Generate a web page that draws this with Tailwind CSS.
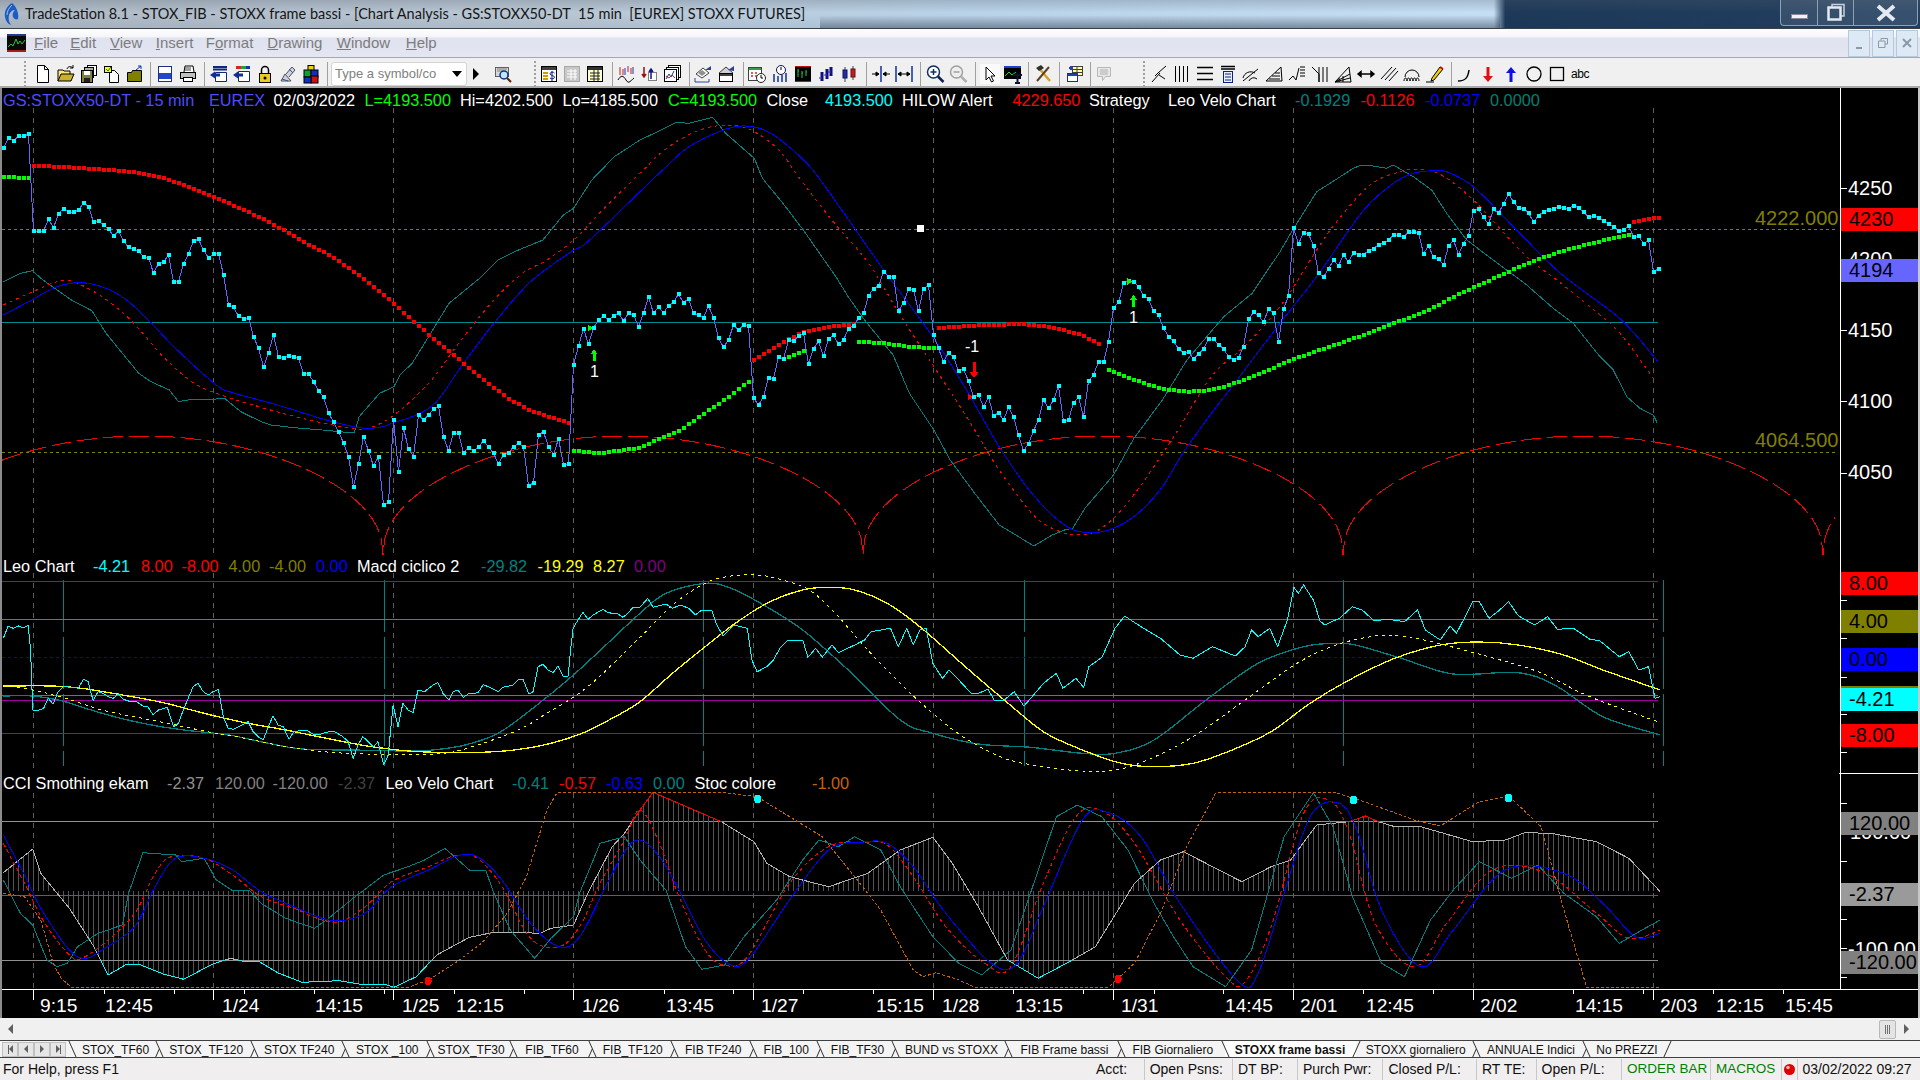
<!DOCTYPE html>
<html>
<head>
<meta charset="utf-8">
<script src="https://cdn.jsdelivr.net/npm/@tailwindcss/browser@4"></script>
</head>
<body class="bg-black">
<div class="w-[1920px] h-[1080px] flex flex-col overflow-hidden bg-[#f0f0f0] font-['Liberation_Sans',Arial,sans-serif]">

<!-- title bar -->
<header class="relative h-[28px] flex items-center pl-[3px] [background:linear-gradient(180deg,transparent_55%,rgba(60,75,95,0.5)_100%)_820px_0/680px_28px_no-repeat,linear-gradient(180deg,rgba(90,100,112,0.3)_0%,rgba(150,160,170,0.05)_45%,rgba(70,85,100,0.12)_100%),linear-gradient(90deg,#b0bcc8_0%,#bccad8_30%,#bcd6ec_50%,#c4def4_70%,#c8e2f8_77.8%,#173354_78.4%,#1c3a5c_100%)]">
  <svg width="18" height="24" viewBox="0 0 18 24"><path d="M9 1C4 4 1 9 2 15c.6 4 3 7 6 8-2-3-3-6-2-10 1-3 3-5 6-5-2 2-3 4-2 7 1 2 3 3 5 2 1-5-1-12-6-16z" fill="#1c5cc4"/><path d="M9 3C6 6 4 9 4 13" stroke="#9cc4f0" fill="none"/></svg>
  <span class="ml-[4px] font-['Lato',sans-serif] text-[14.500px] text-[#161616] whitespace-pre">TradeStation 8.1 - STOX_FIB - STOXX frame bassi - [Chart Analysis - GS:STOXX50-DT  15 min  [EUREX] STOXX FUTURES]</span>
  <div class="ml-auto mr-[2px] h-[26px] w-[138px] flex self-start rounded-b-[4px] border border-t-0 border-[#8fa0b4] bg-[#ffffff18]">
    <div class="w-[37px] flex items-center justify-center border-r border-[#8fa0b4]"><span class="block w-[17px] h-[5px] mt-[7px] bg-[#eef2f6] border border-[#889]"></span></div>
    <div class="w-[36px] flex items-center justify-center border-r border-[#8fa0b4]"><svg width="20" height="20" viewBox="0 0 20 20"><path d="M6 4V1.500h12V13h-3" fill="none" stroke="#c8d2dc" stroke-width="1.500"/><rect x="2.500" y="4.500" width="12" height="12" fill="none" stroke="#e4eaf0" stroke-width="2.500"/></svg></div>
    <div class="flex-1 flex items-center justify-center"><svg width="22" height="20" viewBox="0 0 22 20"><path d="M3 3l16 14M19 3L3 17" stroke="#e4eaf0" stroke-width="4"/></svg></div>
  </div>
</header>
<div class="h-px bg-[#3a3f48]"></div>

<!-- menu bar -->
<nav class="relative h-[28px] flex items-center bg-[linear-gradient(180deg,#fdfdfe_0%,#f6f6f9_28%,#dfe2ef_32%,#e4e6f2_100%)] text-[15px] text-[#7c7c7c]">
  <svg class="ml-[7px]" width="19" height="18" viewBox="0 0 19 18"><rect width="19" height="18" fill="#0a0a0a"/><rect y="0" width="19" height="2" fill="#2a3a8a"/><rect y="16" width="19" height="2" fill="#a02020"/><path d="M1 13l3-3 2 2 3-7 2 5 2-3 2 3 3-4" stroke="#2fc040" fill="none"/></svg>
  <span class="ml-[8px]"><u>F</u>ile</span>
  <span class="ml-[12px]"><u>E</u>dit</span>
  <span class="ml-[14px]"><u>V</u>iew</span>
  <span class="ml-[13.500px]"><u>I</u>nsert</span>
  <span class="ml-[12.500px]">F<u>o</u>rmat</span>
  <span class="ml-[14px]"><u>D</u>rawing</span>
  <span class="ml-[14.400px]"><u>W</u>indow</span>
  <span class="ml-[15.700px]"><u>H</u>elp</span>
  <div class="ml-auto mr-[2px] flex gap-[2px] text-[#8a9aa8]">
    <span class="w-[22px] h-[27px] flex items-end justify-center pb-[7px] bg-[#dde9f4] border border-[#b4cade]"><span class="block w-[6px] h-[2px] bg-[#8a98a8]"></span></span>
    <span class="w-[22px] h-[27px] flex items-center justify-center bg-[#dde9f4] border border-[#b4cade]"><svg width="10" height="10" viewBox="0 0 10 10"><path d="M3 2.500V.5h6.500V6H7M.5 3h6.500v6.500H.5z" fill="none" stroke="#8a98a8"/></svg></span>
    <span class="w-[22px] h-[27px] flex items-center justify-center bg-[#dde9f4] border border-[#b4cade]"><svg width="10" height="10" viewBox="0 0 10 10"><path d="M1 1l8 8M9 1l-8 8" stroke="#8a98a8" stroke-width="2"/></svg></span>
  </div>
</nav>
<div class="h-px bg-[#a4a8b0]"></div>

<!-- toolbar -->
<div class="h-[30px] flex items-center pl-[24px] pt-[3px] bg-[#f0f0f0] border-b-2 border-[#a8a8a8] [&>.g]:flex [&>.g>svg]:mx-[1.5px] [&>.g>svg]:w-5 [&>.g>svg]:h-5 [&>.s]:w-px [&>.s]:h-[24px] [&>.s]:bg-[#a0a0a0] [&>.p]:w-[2px] [&>.p]:h-[26px] [&>.p]:border-l-2 [&>.p]:border-dotted [&>.p]:border-[#a0a0a0]">
  <div class="p"></div>
  <div class="g ml-[5px]">
    <svg viewBox="0 0 20 20"><path d="M4.500 1.500h7l4 4v13h-11z" fill="#fff" stroke="#000"/><path d="M11.500 1.500v4h4" fill="none" stroke="#000"/></svg>
    <svg viewBox="0 0 20 20"><path d="M2 17V6h5l1 1h6v3" fill="#ffe680" stroke="#000"/><path d="M2 17l3-7h13l-3 7z" fill="#c8b030" stroke="#000"/><path d="M11 5c1-3 4-3 6-1m0-3v3h-3" fill="none" stroke="#000"/></svg>
    <svg viewBox="0 0 20 20"><rect x="8.500" y="1.500" width="9" height="10" fill="#fff" stroke="#000"/><rect x="5.500" y="3.500" width="9" height="10" fill="#b0b0a0" stroke="#000"/><rect x="2.500" y="6.500" width="11" height="12" fill="#808040" stroke="#000"/><rect x="5" y="7" width="6" height="4" fill="#fff"/><rect x="5" y="14" width="6" height="4" fill="#202020"/></svg>
    <svg viewBox="0 0 20 20"><path d="M7.500 6.500h5l4 4v8h-9z" fill="#fff" stroke="#000"/><rect x="2.500" y="2.500" width="7" height="6" fill="#ff0" stroke="#000"/><path d="M4 5l2 2 3-4" stroke="#080" fill="none"/></svg>
    <svg viewBox="0 0 20 20"><path d="M2.500 8.500h4l1-2h9v11h-14z" fill="#808000" stroke="#000"/><path d="M11 6l5-4m0 0v3m0-3h-3" fill="none" stroke="#0030c0"/></svg>
  </div>
  <div class="s ml-[4px]"></div>
  <div class="g ml-[2px]">
    <svg viewBox="0 0 20 20"><rect x="3.500" y="2.500" width="13" height="15" fill="#fff" stroke="#203080"/><rect x="4" y="9" width="12" height="6" fill="#2048c8"/></svg>
    <svg viewBox="0 0 20 20"><path d="M6 8l1-6h8l1 6" fill="#fff" stroke="#000"/><rect x="2.500" y="8.500" width="15" height="6" fill="#c0c0c0" stroke="#000"/><rect x="5.500" y="13.500" width="9" height="4" fill="#fff" stroke="#000"/><path d="M7 4h6M7 6h6" stroke="#404040"/></svg>
  </div>
  <div class="s ml-[5px]"></div>
  <div class="g ml-[2.5px]">
    <svg viewBox="0 0 20 20"><path d="M4 3h14M4 5.500h14" stroke="#102880" stroke-width="2"/><path d="M6.500 8.500h11v9h-11z" fill="#fff" stroke="#102880"/><path d="M1 11l5-3.500v2h5v3H6v2z" fill="#103090"/></svg>
    <svg viewBox="0 0 20 20"><rect x="4" y="2" width="5" height="3" fill="#e02020"/><rect x="9" y="2" width="5" height="3" fill="#20a040"/><rect x="14" y="2" width="4" height="3" fill="#2030a0"/><path d="M6.500 7.500h11v10h-11z" fill="#fff" stroke="#102880"/><path d="M1 11l5-3.500v2h5v3H6v2z" fill="#103090"/></svg>
    <svg viewBox="0 0 20 20"><rect x="4.500" y="9.500" width="11" height="9" fill="#e8cc20" stroke="#000"/><path d="M6.500 9V6a3.500 3.500 0 017 0v3" fill="none" stroke="#000" stroke-width="1.500"/><circle cx="10" cy="14" r="1.500"/></svg>
    <svg viewBox="0 0 20 20"><path d="M3 17l4-7 6 7zM8 10l6-7 3 3-6 7" fill="#d0d0e0" stroke="#505050"/><path d="M11 5l4 4M4 15l6 2" stroke="#3050a0"/></svg>
    <svg viewBox="0 0 20 20"><rect x="7" y="1.500" width="6" height="6" fill="#f0d000" stroke="#000"/><rect x="3" y="6" width="7" height="7" fill="#10a030" stroke="#000"/><rect x="10" y="6" width="7" height="7" fill="#1030c0" stroke="#000"/><rect x="10" y="12" width="7" height="7" fill="#d01010" stroke="#000"/><rect x="3" y="13" width="7" height="6" fill="#1030c0" stroke="#000"/></svg>
  </div>
  <div class="s ml-[4.5px]"></div>
  <div class="ml-[3px] w-[136px] h-[24px] flex items-center pl-[3px] bg-white border border-[#d4d4d4] rounded-[3px] text-[13px] text-[#808080]">Type a symbol/co<span class="ml-auto mr-[4px] w-0 h-0 border-x-[5px] border-t-[6px] border-x-transparent border-t-black"></span></div>
  <div class="w-[17px] flex justify-center"><span class="w-0 h-0 border-y-[6px] border-l-[6px] border-y-transparent border-l-black"></span></div>
  <div class="g ml-[7px]">
    <svg viewBox="0 0 20 20"><rect x="2.500" y="3.500" width="13" height="9" fill="#d8d8d8" stroke="#606060"/><path d="M4 5h10M4 7h6" stroke="#808080"/><circle cx="11" cy="11" r="4" fill="#bfe6ff" stroke="#103080" stroke-width="1.500"/><path d="M14 14l4 4" stroke="#602000" stroke-width="2"/></svg>
  </div>
  <div class="p ml-[20px]"></div>
  <div class="g ml-[1px]">
    <svg viewBox="0 0 20 20"><rect x="2.500" y="2.500" width="15" height="15" fill="#fff" stroke="#000"/><rect x="3" y="3" width="14" height="3" fill="#404040"/><path d="M4 9h5M4 12h5M4 15h5" stroke="#d0a000" stroke-width="2"/><path d="M13 7v10M15.500 9c-1-1.500-4.500-1-4.500.8s4.500 1.500 4.500 3.400-3.500 2-4.500.8" stroke="#102080" fill="none"/></svg>
    <svg viewBox="0 0 20 20"><rect x="2.500" y="2.500" width="15" height="15" fill="#c8c8c8" stroke="#a8a8a8"/><path d="M5 7h10M5 10h10M5 13h10M9 5v11M13 5v11" stroke="#fff"/></svg>
    <svg viewBox="0 0 20 20"><rect x="2.500" y="2.500" width="15" height="15" fill="#ffffc8" stroke="#000"/><rect x="3" y="3" width="14" height="3" fill="#303030"/><path d="M5 9h10M5 12h10M5 15h10M9 6v11M13 6v11" stroke="#202020"/></svg>
  </div>
  <div class="s ml-[5.5px]"></div>
  <div class="g ml-[2px]">
    <svg viewBox="0 0 20 20"><path d="M4 3v8M7 5v6M12 2v6M15 4v6" stroke="#c02020"/><path d="M9 4v7M17 3v7" stroke="#2030c0"/><path d="M2 16c3-5 5-5 8 0s5 0 8-2" stroke="#000" fill="none"/></svg>
    <svg viewBox="0 0 20 20"><rect x="9.500" y="8.500" width="8" height="8" fill="#fff" stroke="#808080"/><path d="M5 3v9M3 10l2 3 2-3" stroke="#901010" fill="none" stroke-width="1.500"/><path d="M12 15V6M10 8l2-3 2 3" stroke="#101090" fill="none" stroke-width="1.500"/></svg>
    <svg viewBox="0 0 20 20"><rect x="6.500" y="1.500" width="12" height="12" fill="#fff" stroke="#000"/><rect x="4.500" y="3.500" width="12" height="12" fill="#fff" stroke="#000"/><rect x="2.500" y="5.500" width="12" height="12" fill="#fff" stroke="#000"/><path d="M4 15l3-5 2 3 3-6" stroke="#1030a0" fill="none"/><path d="M4 12l3 2 3-3 3 3" stroke="#c02020" fill="none"/></svg>
  </div>
  <div class="s ml-[5px]"></div>
  <div class="g ml-[1.5px]">
    <svg viewBox="0 0 20 20"><path d="M3 10l7-6 6 5-7 5z" fill="#fff" stroke="#404040"/><path d="M5 9l4-3 4 3-4 3z" fill="#909090"/><path d="M12 6l6-4v4" fill="#3040a0"/><path d="M2 18h14v-3" stroke="#3040a0" fill="none"/><path d="M2 14v4" stroke="#3040a0"/></svg>
    <svg viewBox="0 0 20 20"><rect x="3.500" y="9.500" width="13" height="8" fill="#fff" stroke="#000"/><rect x="4" y="10" width="12" height="2" fill="#404040"/><path d="M3 9l7-6 7 6" fill="#d0d0d0" stroke="#404040"/><path d="M12 6l6-4v5" fill="#3040a0"/></svg>
  </div>
  <div class="s ml-[5.5px]"></div>
  <div class="g ml-[2px]">
    <svg viewBox="0 0 20 20"><rect x="1.500" y="3.500" width="13" height="13" fill="#fff" stroke="#404040"/><rect x="2" y="4" width="12" height="2" fill="#30a040"/><path d="M4 9h2M8 9h2M4 12h2M8 12h2" stroke="#c03030" stroke-width="1.500"/><circle cx="14" cy="14" r="4.500" fill="#fff" stroke="#202020"/><path d="M14 11v3h2" stroke="#000" fill="none"/></svg>
    <svg viewBox="0 0 20 20"><circle cx="11" cy="6" r="4.500" fill="#fff" stroke="#101050"/><path d="M11 3v3" stroke="#000"/><path d="M4 10v8M8 12v6M12 11v7M16 9v9" stroke="#1030a0" stroke-width="1.500"/></svg>
    <svg viewBox="0 0 20 20"><rect x="2" y="2" width="16" height="16" fill="#000"/><rect x="2" y="2" width="16" height="1" fill="#c01010"/><rect x="2" y="17" width="16" height="1" fill="#c01010"/><path d="M5 5v8M5 7h1M9 7v7M9 9h1M13 6v6M13 8h1" stroke="#20d040"/></svg>
    <svg viewBox="0 0 20 20"><path d="M6 8v9M11 5v10M15 3v9" stroke="#101080" stroke-width="3"/><path d="M3 14h3M8 11h3M12 8h3" stroke="#3030b0"/></svg>
    <svg viewBox="0 0 20 20"><path d="M6 3v15M14 2v14" stroke="#404040"/><rect x="4" y="6" width="4" height="8" fill="#2030a0" stroke="#101060"/><rect x="12" y="5" width="4" height="8" fill="#c02020" stroke="#601010"/></svg>
  </div>
  <div class="s ml-[5px]"></div>
  <div class="g ml-[2.5px]">
    <svg viewBox="0 0 20 20"><path d="M10 2v16" stroke="#1030a0" stroke-width="1.500"/><path d="M1 10h7M8 10l-3-2v4zM19 10h-7M12 10l3-2v4z" stroke="#000" fill="#000"/></svg>
    <svg viewBox="0 0 20 20"><path d="M2 2v16M18 2v16" stroke="#1030a0" stroke-width="1.500"/><path d="M4 10h12M4 10l3-2v4zM16 10l-3-2v4z" stroke="#000" fill="#000"/></svg>
  </div>
  <div class="s ml-[4.5px]"></div>
  <div class="g ml-[3px]">
    <svg viewBox="0 0 20 20"><circle cx="8.500" cy="8" r="6" fill="#fff" stroke="#103060" stroke-width="1.500"/><path d="M5.500 8h6M8.500 5v6" stroke="#103060" stroke-width="1.500"/><path d="M13 12.500l5.500 5.500" stroke="#102050" stroke-width="2.500"/></svg>
    <svg viewBox="0 0 20 20"><circle cx="8.500" cy="8" r="6" fill="#eee" stroke="#a0a0a0" stroke-width="1.500"/><path d="M5.500 8h6" stroke="#a0a0a0" stroke-width="1.500"/><path d="M13 12.500l5.500 5.500" stroke="#b0b0b0" stroke-width="2.500"/></svg>
  </div>
  <div class="s ml-[5px]"></div>
  <div class="g ml-[2.5px]">
    <svg viewBox="0 0 20 20"><rect x="-1" y="-1" width="22" height="22" fill="#fafafa" stroke="#c0c0c0"/><path d="M6 3v13l3-3 2.500 5 2-1-2.500-5h4z" fill="#fff" stroke="#000"/></svg>
    <svg viewBox="0 0 20 20"><rect x="1" y="2" width="17" height="13" fill="#000"/><rect x="1" y="2" width="17" height="2" fill="#2040d0"/><path d="M2 12l4-4 3 3 4-3" stroke="#20d040" fill="none"/><path d="M10 11h9M14.500 11v8M12 19h5" stroke="#101030" stroke-width="2"/></svg>
  </div>
  <div class="s ml-[4px]"></div>
  <div class="g ml-[2px]">
    <svg viewBox="0 0 20 20"><path d="M5 3l12 14" stroke="#d8a020" stroke-width="2.500"/><path d="M16 3L4 17" stroke="#604020" stroke-width="2"/><path d="M3 4l5-3 3 3-3 2-2 1z" fill="#303030"/></svg>
  </div>
  <div class="s ml-[4.500px]"></div>
  <div class="g ml-[2.500px]">
    <svg viewBox="0 0 20 20"><rect x="8.500" y="2.500" width="10" height="9" fill="#ffffa0" stroke="#404040"/><path d="M8 5.500h10M8 8.500h10M13 3v8" stroke="#404040"/><rect x="3.500" y="9.500" width="10" height="8" fill="#fff" stroke="#203080"/><rect x="4" y="10" width="9" height="2" fill="#2040b0"/><path d="M5 4h4M7 2v4" stroke="#2040c0" stroke-width="2"/></svg>
  </div>
  <div class="s ml-[4.500px]"></div>
  <div class="g ml-[2px]">
    <svg viewBox="0 0 20 20"><path d="M3.500 3.500h13v9h-5l-3 4v-4h-5z" fill="#e8e8e8" stroke="#b8b8b8"/><path d="M6 6h8M6 8h8M6 10h8" stroke="#b0b0b0"/></svg>
  </div>
  <div class="p ml-[27px]"></div>
  <div class="g ml-[2.500px] [&>svg]:fill-none [&>svg]:stroke-black">
    <svg viewBox="0 0 20 20"><path d="M3 18l8-9M6 12l3-3 8-7M10 11l6 4"/></svg>
    <svg viewBox="0 0 20 20"><path d="M3.500 2v16M7.500 2v16M11.500 2v16M15.500 2v16"/></svg>
    <svg viewBox="0 0 20 20"><path d="M2 3.500h16M2 9.500h16M2 15.500h16" stroke-width="1.500"/></svg>
    <svg viewBox="0 0 20 20"><path d="M3 2.500h14M3 5h14" stroke-width="1.500"/><rect x="5.500" y="7.500" width="9" height="11" fill="#e8f0ff" stroke="#102080"/><path d="M7 10h6M7 13h6M7 16h6" stroke="#102080"/></svg>
    <svg viewBox="0 0 20 20"><path d="M2 17l15-12M2 14a8 8 0 0 1 12-5M8 17a5 5 0 0 1 8-2"/></svg>
    <svg viewBox="0 0 20 20"><path d="M2 17h16L17 3zM5 15h11M8 12h8M11 9h5"/></svg>
    <svg viewBox="0 0 20 20"><path d="M2 16l4-4 3 4 3-12M13 3h5M13 6h5M13 9h5M13 12h5"/></svg>
    <svg viewBox="0 0 20 20"><path d="M2 3l7 7v8M9 3v15M13 3v15M17 3v15"/></svg>
    <svg viewBox="0 0 20 20"><path d="M2 18h16L16 3zM2 18l15-8M2 18l15-4M6 14v4M10 12v6"/></svg>
    <svg viewBox="0 0 20 20"><path d="M2 10h16M2 10l3-2.500v5zM18 10l-3-2.500v5z" fill="#000" stroke-width="1.500"/></svg>
    <svg viewBox="0 0 20 20"><path d="M2 15L13 3M6 16L17 4M10 17L19 7"/></svg>
    <svg viewBox="0 0 20 20"><path d="M3 13a7 7 0 0 1 14 0M2 17c0-4 3-4 3 0 0-4 3-4 3 0 0-4 3-4 3 0 0-4 3-4 3 0 0-4 3-4 3 0"/></svg>
    <svg viewBox="0 0 20 20"><path d="M1 18h8"/><path d="M7 14L15 3l3 2-9 11-3 1z" fill="#f0d000"/><path d="M15 3l3 2" stroke="#c01010" stroke-width="2"/></svg>
  </div>
  <div class="s ml-[4.500px]"></div>
  <div class="g ml-[2px] [&>svg]:fill-none [&>svg]:stroke-black">
    <svg viewBox="0 0 20 20"><path d="M3 17c8 0 10-4 11-11" stroke-width="1.500"/></svg>
    <svg viewBox="0 0 20 20"><path d="M10 3v10" stroke="#e01010" stroke-width="3"/><path d="M5 12h10l-5 6z" fill="#e01010" stroke="none"/></svg>
    <svg viewBox="0 0 20 20"><path d="M10 8v10" stroke="#1010e0" stroke-width="3"/><path d="M5 9h10l-5-6z" fill="#1010e0" stroke="none"/></svg>
    <svg viewBox="0 0 20 20"><circle cx="10" cy="10" r="7" stroke-width="1.300"/></svg>
    <svg viewBox="0 0 20 20"><rect x="3.500" y="3.500" width="13" height="13" stroke-width="1.300"/></svg>
    <span class="mx-[1.500px] w-[20px] text-center text-[12px] leading-[20px] tracking-[-0.5px] text-black">abc</span>
  </div>
</div>

<!-- chart -->
<main class="relative h-[930px] bg-black border-x-2 border-l-[#8c8c8c] border-r-[#c8c8c8] overflow-hidden">
  <svg id="chart" class="absolute left-[-2px] top-0" width="1920" height="930" viewBox="0 88 1920 930" shape-rendering="crispEdges"></svg>

  <!-- legends -->
  <div class="absolute left-[-2px] top-[2px] text-[16.300px] leading-[20px] whitespace-nowrap [&>span]:absolute">
    <span class="left-[3px] text-[#4c4cff]">GS:STOXX50-DT - 15 min</span>
    <span class="left-[209px] text-[#4c4cff]">EUREX</span>
    <span class="left-[273.500px] text-white">02/03/2022</span>
    <span class="left-[364.500px] text-[#00ff00]">L=4193.500</span>
    <span class="left-[460px] text-white">Hi=4202.500</span>
    <span class="left-[562.500px] text-white">Lo=4185.500</span>
    <span class="left-[668px] text-[#00ff00]">C=4193.500</span>
    <span class="left-[766.500px] text-white">Close</span>
    <span class="left-[825px] text-[#00ffff]">4193.500</span>
    <span class="left-[902px] text-white">HILOW Alert</span>
    <span class="left-[1012.500px] text-[#ff0000]">4229.650</span>
    <span class="left-[1089px] text-white">Strategy</span>
    <span class="left-[1168px] text-white">Leo Velo Chart</span>
    <span class="left-[1295px] text-[#008080]">-0.1929</span>
    <span class="left-[1360.500px] text-[#ff0000]">-0.1126</span>
    <span class="left-[1425px] text-[#0000ff]">-0.0737</span>
    <span class="left-[1490px] text-[#008070]">0.0000</span>
  </div>
  <div class="absolute left-[-2px] top-[468px] text-[16.300px] leading-[20px] whitespace-nowrap [&>span]:absolute">
    <span class="left-[3px] text-white">Leo Chart</span>
    <span class="left-[93px] text-[#00ffff]">-4.21</span>
    <span class="left-[141px] text-[#ff0000]">8.00</span>
    <span class="left-[181.500px] text-[#ff0000]">-8.00</span>
    <span class="left-[228.500px] text-[#808000]">4.00</span>
    <span class="left-[269px] text-[#808000]">-4.00</span>
    <span class="left-[316px] text-[#0000ff]">0.00</span>
    <span class="left-[357px] text-white">Macd ciclico 2</span>
    <span class="left-[481px] text-[#008080]">-29.82</span>
    <span class="left-[537.500px] text-[#ffff00]">-19.29</span>
    <span class="left-[593px] text-[#ffff00]">8.27</span>
    <span class="left-[634px] text-[#800080]">0.00</span>
  </div>
  <div class="absolute left-[-2px] top-[685px] text-[16.300px] leading-[20px] whitespace-nowrap [&>span]:absolute">
    <span class="left-[3px] text-white">CCI Smothing ekam</span>
    <span class="left-[167px] text-[#909090]">-2.37</span>
    <span class="left-[215px] text-[#808080]">120.00</span>
    <span class="left-[272.500px] text-[#808080]">-120.00</span>
    <span class="left-[338px] text-[#404040]">-2.37</span>
    <span class="left-[385.500px] text-white">Leo Velo Chart</span>
    <span class="left-[512px] text-[#008080]">-0.41</span>
    <span class="left-[559px] text-[#ff0000]">-0.57</span>
    <span class="left-[606px] text-[#0000ff]">-0.63</span>
    <span class="left-[653px] text-[#008080]">0.00</span>
    <span class="left-[694.500px] text-white">Stoc colore</span>
    <span class="left-[812px] text-[#c86400]">-1.00</span>
  </div>

  <!-- chart notes -->
  <div class="absolute left-[-2px] top-0 text-[16px] leading-[20px] text-white [&>span]:absolute">
    <span class="left-[590px] top-[274px]">1</span>
    <span class="left-[965px] top-[249px]">-1</span>
    <span class="left-[1129px] top-[220px]">1</span>
  </div>
  <div class="absolute left-[-2px] top-0 text-[20px] leading-[20px] text-[#808000] [&>span]:absolute">
    <span class="left-[1755px] top-[120px]">4222.000</span>
    <span class="left-[1755px] top-[342px]">4064.500</span>
  </div>

  <!-- right axis labels -->
  <div class="absolute left-[-2px] top-0 text-[20px] leading-[20px] text-white [&>span]:absolute">
    <span class="left-[1848px] top-[90px]">4250</span>
    <span class="left-[1848px] top-[161px]">4200</span>
    <span class="left-[1848px] top-[232px]">4150</span>
    <span class="left-[1848px] top-[303px]">4100</span>
    <span class="left-[1848px] top-[374px]">4050</span>
    <span class="left-[1850px] top-[734px]">100.00</span>
    <span class="left-[1848px] top-[851px]">-100.00</span>
  </div>
  <div class="absolute left-[-2px] top-0 text-[20px] leading-[23px] text-black [&>span]:absolute [&>span]:left-[1841px] [&>span]:w-[77px] [&>span]:h-[23px] [&>span]:pl-[8px]">
    <span class="top-[120px] bg-[#ff0000]">4230</span>
    <span class="top-[171px] bg-[#6666ff]">4194</span>
    <span class="top-[484px] bg-[#ff0000]">8.00</span>
    <span class="top-[522px] bg-[#808000]">4.00</span>
    <span class="top-[560px] bg-[#0000ff]">0.00</span>
    <span class="top-[598px] h-[2px] bg-[#808000]"></span>
    <span class="top-[600px] bg-[#00ffff]">-4.21</span>
    <span class="top-[636px] bg-[#ff0000]">-8.00</span>
    <span class="top-[724px] bg-[#808080]">120.00</span>
    <span class="top-[795px] bg-[#9a9a9a]">-2.37</span>
    <span class="top-[863px] bg-[#808080] pl-[7px]">-120.00</span>
  </div>

  <!-- time axis labels -->
  <div class="absolute left-[-2px] top-[908px] text-[19.200px] leading-[20px] text-white whitespace-nowrap [&>span]:absolute">
    <span class="left-[40px]">9:15</span>
    <span class="left-[105px]">12:45</span>
    <span class="left-[222px]">1/24</span>
    <span class="left-[315px]">14:15</span>
    <span class="left-[402px]">1/25</span>
    <span class="left-[456px]">12:15</span>
    <span class="left-[582px]">1/26</span>
    <span class="left-[666px]">13:45</span>
    <span class="left-[761px]">1/27</span>
    <span class="left-[876px]">15:15</span>
    <span class="left-[942px]">1/28</span>
    <span class="left-[1015px]">13:15</span>
    <span class="left-[1121px]">1/31</span>
    <span class="left-[1225px]">14:45</span>
    <span class="left-[1300px]">2/01</span>
    <span class="left-[1366px]">12:45</span>
    <span class="left-[1480px]">2/02</span>
    <span class="left-[1575px]">14:15</span>
    <span class="left-[1660px]">2/03</span>
    <span class="left-[1716px]">12:15</span>
    <span class="left-[1785px]">15:45</span>
  </div>
</main>

<!-- horizontal scrollbar -->
<div class="h-[22px] flex items-center bg-[#f0f0f0]">
  <span class="ml-[8px] w-0 h-0 border-y-[5px] border-r-[5px] border-y-transparent border-r-[#606060]"></span>
  <span class="ml-auto w-[17px] h-[19px] flex items-center justify-center gap-px bg-[#e4e4e4] border border-[#b8b8b8] rounded-[2px]"><i class="w-px h-[9px] bg-[#707070]"></i><i class="w-px h-[9px] bg-[#707070]"></i><i class="w-px h-[9px] bg-[#707070]"></i></span>
  <span class="ml-[8px] mr-[11px] w-0 h-0 border-y-[5px] border-l-[5px] border-y-transparent border-l-[#606060]"></span>
</div>

<!-- sheet tabs -->
<div class="h-[18px] flex items-center border-y border-[#404040] bg-[#f4f4f4] text-[12px] text-[#101010] whitespace-nowrap [&>.t]:relative [&>.t]:h-full [&>.t]:flex [&>.t]:items-center [&>.t]:justify-center [&>.t]:pt-px">
  <div class="w-[72px] h-full flex items-center pl-[2px] [&>span]:w-[16px] [&>span]:h-[15px] [&>span]:flex [&>span]:items-center [&>span]:justify-center [&>span]:bg-[#e6e6e6] [&>span]:border [&>span]:border-[#c0c0c0]">
    <span><i class="w-px h-[9px] bg-[#606060]"></i><i class="w-0 h-0 border-y-[4px] border-r-[4px] border-y-transparent border-r-[#606060]"></i></span>
    <span><i class="w-0 h-0 border-y-[4px] border-r-[4px] border-y-transparent border-r-[#606060]"></i></span>
    <span><i class="w-0 h-0 border-y-[4px] border-l-[4px] border-y-transparent border-l-[#606060]"></i></span>
    <span><i class="w-0 h-0 border-y-[4px] border-l-[4px] border-y-transparent border-l-[#606060]"></i><i class="w-px h-[9px] bg-[#606060]"></i></span>
  </div>
  <div class="t w-[87px]"><i class="absolute left-0 top-0 h-full w-px bg-[#303030] skew-x-[24deg]"></i>STOX_TF60</div>
  <div class="t w-[94.500px]"><i class="absolute left-0 top-0 h-full w-px bg-[#303030] skew-x-[24deg]"></i><i class="absolute left-[-2px] bottom-0 h-1/2 w-px bg-[#303030] -skew-x-[24deg]"></i>STOX_TF120</div>
  <div class="t w-[91.500px]"><i class="absolute left-0 top-0 h-full w-px bg-[#303030] skew-x-[24deg]"></i><i class="absolute left-[-2px] bottom-0 h-1/2 w-px bg-[#303030] -skew-x-[24deg]"></i>STOX TF240</div>
  <div class="t w-[84.500px]"><i class="absolute left-0 top-0 h-full w-px bg-[#303030] skew-x-[24deg]"></i><i class="absolute left-[-2px] bottom-0 h-1/2 w-px bg-[#303030] -skew-x-[24deg]"></i>STOX _100</div>
  <div class="t w-[83px]"><i class="absolute left-0 top-0 h-full w-px bg-[#303030] skew-x-[24deg]"></i><i class="absolute left-[-2px] bottom-0 h-1/2 w-px bg-[#303030] -skew-x-[24deg]"></i>STOX_TF30</div>
  <div class="t w-[79px]"><i class="absolute left-0 top-0 h-full w-px bg-[#303030] skew-x-[24deg]"></i><i class="absolute left-[-2px] bottom-0 h-1/2 w-px bg-[#303030] -skew-x-[24deg]"></i>FIB_TF60</div>
  <div class="t w-[82.500px]"><i class="absolute left-0 top-0 h-full w-px bg-[#303030] skew-x-[24deg]"></i><i class="absolute left-[-2px] bottom-0 h-1/2 w-px bg-[#303030] -skew-x-[24deg]"></i>FIB_TF120</div>
  <div class="t w-[78.500px]"><i class="absolute left-0 top-0 h-full w-px bg-[#303030] skew-x-[24deg]"></i><i class="absolute left-[-2px] bottom-0 h-1/2 w-px bg-[#303030] -skew-x-[24deg]"></i>FIB TF240</div>
  <div class="t w-[67.500px]"><i class="absolute left-0 top-0 h-full w-px bg-[#303030] skew-x-[24deg]"></i><i class="absolute left-[-2px] bottom-0 h-1/2 w-px bg-[#303030] -skew-x-[24deg]"></i>FIB_100</div>
  <div class="t w-[75px]"><i class="absolute left-0 top-0 h-full w-px bg-[#303030] skew-x-[24deg]"></i><i class="absolute left-[-2px] bottom-0 h-1/2 w-px bg-[#303030] -skew-x-[24deg]"></i>FIB_TF30</div>
  <div class="t w-[113px]"><i class="absolute left-0 top-0 h-full w-px bg-[#303030] skew-x-[24deg]"></i><i class="absolute left-[-2px] bottom-0 h-1/2 w-px bg-[#303030] -skew-x-[24deg]"></i>BUND vs STOXX</div>
  <div class="t w-[113px]"><i class="absolute left-0 top-0 h-full w-px bg-[#303030] skew-x-[24deg]"></i><i class="absolute left-[-2px] bottom-0 h-1/2 w-px bg-[#303030] -skew-x-[24deg]"></i>FIB Frame bassi</div>
  <div class="t w-[103.500px]"><i class="absolute left-0 top-0 h-full w-px bg-[#303030] skew-x-[24deg]"></i><i class="absolute left-[-2px] bottom-0 h-1/2 w-px bg-[#303030] -skew-x-[24deg]"></i>FIB Giornaliero</div>
  <div class="t w-[131px] bg-white font-bold"><i class="absolute left-0 top-0 h-full w-px bg-[#303030] skew-x-[24deg]"></i>STOXX frame bassi</div>
  <div class="t w-[120.500px]"><i class="absolute left-0 top-0 h-full w-px bg-[#303030] -skew-x-[24deg]"></i>STOXX giornaliero</div>
  <div class="t w-[110px]"><i class="absolute left-0 top-0 h-full w-px bg-[#303030] skew-x-[24deg]"></i><i class="absolute left-[-2px] bottom-0 h-1/2 w-px bg-[#303030] -skew-x-[24deg]"></i>ANNUALE Indici</div>
  <div class="t w-[82px]"><i class="absolute left-0 top-0 h-full w-px bg-[#303030] skew-x-[24deg]"></i><i class="absolute left-[-2px] bottom-0 h-1/2 w-px bg-[#303030] -skew-x-[24deg]"></i>No PREZZI<i class="absolute right-0 top-0 h-full w-px bg-[#303030] -skew-x-[24deg]"></i></div>
</div>

<!-- status bar -->
<footer class="h-[22px] flex items-center pt-px bg-[#f0eeee] text-[14px] text-[#101010] whitespace-nowrap [&>.c]:h-full [&>.c]:flex [&>.c]:items-center [&>.c]:pl-[5px] [&>.c]:border-l [&>.c]:border-[#c8c8c8]">
  <span class="pl-[3px] flex-1">For Help, press F1</span>
  <span class="w-[53.700px] pl-[6px]">Acct:</span>
  <span class="c w-[88.300px]">Open Psns:</span>
  <span class="c w-[65px]">DT BP:</span>
  <span class="c w-[85.500px]">Purch Pwr:</span>
  <span class="c w-[93.500px]">Closed P/L:</span>
  <span class="c w-[59.600px]">RT TE:</span>
  <span class="c w-[85.400px]">Open P/L:</span>
  <span class="c w-[89px] text-[13.500px] text-[#008000]">ORDER BAR</span>
  <span class="c w-[70.600px] text-[13.500px] text-[#008000]">MACROS</span>
  <span class="c w-[16px]"><svg class="ml-[-4px] shrink-0" width="13" height="13" viewBox="0 0 13 13"><circle cx="6.500" cy="6.500" r="5.500" fill="#e00000"/><circle cx="5" cy="4.500" r="1.800" fill="#ffb0b0"/></svg></span>
  <span class="c w-[123.500px]">03/02/2022 09:27</span>
</footer>
</div>

<script>
const zA=x=>x/2.45, zB=x=>640+x/2.45, zC=x=>1160+x/3, zD=x=>640+x/1.537;
const yA=y=>100+y/3, yB=y=>550+y/3;
const P=(f,g,a)=>{const o=[];for(let i=0;i<a.length;i+=2)o.push([f(a[i]),g(a[i+1])]);return o};
const C=(g,a)=>P(zC,g,a).filter(p=>p[0]>=1279.9);
const uniq=a=>a.filter((p,i)=>i==0||p[0]>a[i-1][0]+0.2);
let s='';
const poly=(p,c,w=1,d='')=>{s+=`<path d="M${p.map(q=>q[0].toFixed(1)+' '+q[1].toFixed(1)).join('L')}" fill="none" stroke="${c}" stroke-width="${w}" ${d?`stroke-dasharray="${d}"`:''} stroke-linejoin="round"/>`};
const smooth=(p,c,w=1,d='')=>{let t=`M${p[0][0].toFixed(1)} ${p[0][1].toFixed(1)}`;for(let i=0;i<p.length-1;i++){const a=p[i-1]||p[i],b=p[i],e=p[i+1],f=p[i+2]||e;t+=`C${(b[0]+(e[0]-a[0])/6).toFixed(1)} ${(b[1]+(e[1]-a[1])/6).toFixed(1)} ${(e[0]-(f[0]-b[0])/6).toFixed(1)} ${(e[1]-(f[1]-b[1])/6).toFixed(1)} ${e[0].toFixed(1)} ${e[1].toFixed(1)}`}s+=`<path d="${t}" fill="none" stroke="${c}" stroke-width="${w}" ${d?`stroke-dasharray="${d}"`:''}/>`};
const lerp=(p,x)=>{for(let i=0;i<p.length-1;i++){if(x>=p[i][0]&&x<=p[i+1][0]){const t=(x-p[i][0])/(p[i+1][0]-p[i][0]||1);return p[i][1]+t*(p[i+1][1]-p[i][1])}}return x<p[0][0]?p[0][1]:p[p.length-1][1]};
const hl=(y,x1,x2,c,w=1,d='')=>{s+=`<path d="M${x1} ${y}H${x2}" stroke="${c}" stroke-width="${w}" ${d?`stroke-dasharray="${d}"`:''}/>`};
const vl=(x,y1,y2,c,w=1,d='')=>{s+=`<path d="M${x} ${y1}V${y2}" stroke="${c}" stroke-width="${w}" ${d?`stroke-dasharray="${d}"`:''}/>`};
const dots=(p,c,x1,x2)=>{for(let k=Math.ceil((x1-3.5)/5);3.5+5*k<=x2;k++){const x=3.5+5*k;s+=`<rect x="${x-2}" y="${(lerp(p,x)-2).toFixed(1)}" width="4" height="4" fill="${c}"/>`}};

s+=`<defs><clipPath id="ca"><rect x="0" y="0" width="1920" height="821.7"/></clipPath><clipPath id="cb"><rect x="0" y="821.7" width="1920" height="138.600"/></clipPath><clipPath id="cc"><rect x="0" y="960.300" width="1920" height="100"/></clipPath></defs>`;

/* vertical grid */
for(let k=0;k<10;k++){const x=33.5+180*k;vl(x,108,555,'#5c5c5c',1,'5 5');vl(x,573,771,'#5c5c5c',1,'5 5');vl(x,793,989,'#5c5c5c',1,'5 5');}
/* teal cycle markers panel 2 */
[63,384,703,1024,1343,1663].forEach(x=>vl(x+.5,580,766,'#008080',1,'52 5'));

/* main panel */
hl(229.5,2,1838,'#808000',1,'3 3');
hl(452.5,2,1838,'#808000',1,'3 3');
hl(322.5,2,1658,'#008c8c',1);
{let a=[];for(let x=2;x<=1836;x+=1.5){const d=((x-383)%480+480)%480;a.push([x,555-119*Math.pow(Math.sin(Math.PI*d/480),.45)])}poly(a,'#ff0000',1,'20 6');}

poly(uniq([...P(zA,yA,[8,545,50,520,80,512,100,535,140,570,175,600,225,632,260,700,300,760,340,820,370,845,415,870,437,905,470,898,520,898,550,895,590,935,640,965,665,975,720,983,790,990,840,996,868,998,880,950,930,880,965,860,980,825,1010,790,1050,710,1100,610,1180,530,1220,480,1260,455,1330,420,1380,345,1405,325,1450,240,1505,170,1568,120]),...P(zB,yA,[40,97,90,67,120,70,178,52,210,100,280,175,300,235,350,310,400,390,480,530,510,590,550,660,620,765,660,880,720,990,760,1080,820,1180,880,1275,965,1338,1010,1305,1040,1290,1060,1285,1090,1225,1160,1125,1210,1015,1280,900,1340,780,1430,650,1500,580,1568,455]),...C(yA,[395,395,470,275,510,250,580,205,605,195,640,198,680,205,700,195,760,230,815,270,860,340,920,420,1000,480,1100,555,1180,625,1240,670,1320,770,1360,810,1400,890,1440,925,1480,945,1492,970])]),'#008080');

smooth(uniq([...P(zA,yA,[8,615,80,575,140,545,180,545,250,590,320,660,400,770,470,845,530,880,620,915,740,955,860,985,900,985,960,950,1050,850,1130,720,1210,600,1280,520,1340,480,1410,415,1480,325,1568,220]),...P(zB,yA,[60,150,130,98,190,77,240,78,280,95,340,150,400,250,480,375,560,490,640,650,720,800,800,950,880,1110,960,1240,1010,1285,1070,1305,1130,1285,1200,1200,1300,1025,1400,830,1480,740,1568,620]),...C(yA,[470,450,530,365,630,255,720,215,780,208,850,228,940,300,1010,375,1100,470,1190,540,1290,620,1380,700,1480,835])]),'#ff0000',1,'3 4');

smooth(uniq([...P(zA,yA,[8,645,70,605,140,560,200,548,260,565,310,600,370,668,430,745,530,855,570,878,660,908,720,930,800,960,880,983,930,982,965,968,1020,945,1070,905,1130,800,1210,670,1300,545,1400,455,1440,425,1568,275]),...P(zB,yA,[60,205,120,140,200,92,250,78,300,88,350,125,420,205,500,340,600,515,720,715,800,870,880,1040,960,1180,1040,1275,1100,1298,1160,1285,1220,1240,1280,1160,1330,1060,1400,940,1460,845,1568,670]),...C(yA,[470,530,560,400,620,320,700,250,760,220,820,212,860,215,940,260,1060,380,1190,510,1280,580,1390,665,1492,782])]),'#0000ff');

/* red / green dotted strategy lines */
dots(P(zA,yA,[8,230,70,234]),'#00ff00',3,31);
dots(P(zA,yA,[80,197,200,204,300,213,350,220,400,235,450,255,500,280,550,305,600,332,650,360,700,395,750,430,800,462,850,500,900,545,950,595,1000,650,1050,705,1100,755,1150,805,1200,855,1250,900,1300,932,1350,952,1392,968]),'#ff0000',33,570);
dots(uniq([...P(zA,yA,[1404,1052,1465,1060,1563,1044]),...P(zB,yA,[50,1015,100,990,150,945,200,905,265,845])]),'#00ff00',573,749);
dots(P(zB,yA,[277,780,340,733,400,695,450,683,522,672]),'#ff0000',753,854);
dots(P(zB,yA,[350,778,405,750]),'#00ff00',783,806);
dots(P(zB,yA,[535,725,600,730,660,740,725,745]),'#00ff00',858,936);
dots(P(zB,yA,[725,684,840,675,940,672,1010,682,1080,705,1135,738]),'#ff0000',938,1103);
dots(uniq([...P(zB,yA,[1147,808,1190,832,1250,855]),...P(zC,yA,[10,868,85,875,130,873,200,858,300,820,400,777,500,743,600,708,700,670,800,632,900,580,1000,535,1100,490,1200,455,1300,428,1405,404])]),'#00ff00',1108,1629);
dots(P(zC,yA,[1420,365,1495,353]),'#ff0000',1633,1659);

/* price */
{const raw=[...P(zA,yA,[8,143,20,113,32,123,45,108,57,108,69,103,81,393,94,393,106,393,118,358,130,383,142,341,155,326,167,336,179,336,192,331,204,308,216,320,228,366,241,362,253,376,265,387,277,408,290,394,302,423,314,442,326,448,339,452,351,470,363,473,375,519,388,491,400,485,412,466,424,545,436,545,449,491,461,461,473,423,485,418,498,450,510,473,522,463,535,461,547,524,559,614,571,622,584,648,596,656,608,653,620,710,632,745,645,801,657,758,669,706,681,770,694,775,706,768,718,770,730,773,742,822,755,821,767,845,779,872,791,892,804,938,816,966,828,996,840,1028,853,1070,865,1160,877,1092,889,1010,902,1052,914,1098,926,1070,939,1215,951,1206,963,960,975,1115,987,985,1000,1046,1012,1070,1024,946,1036,960,1049,944,1061,928,1073,919,1085,1010,1098,1052,1110,998,1122,1000,1135,1058,1147,1043,1159,1052,1171,1041,1184,1022,1196,1041,1208,1060,1220,1092,1232,1064,1245,1058,1257,1040,1269,1030,1281,1040,1294,1157,1306,1149,1318,1004,1330,996,1343,1040,1355,1064,1367,1016,1380,1094,1392,1092,1404,795,1416,738,1428,686,1441,733,1453,683,1465,660,1477,648,1490,660,1502,648,1514,640,1526,662,1538,640,1551,644,1563,680]),
...P(zB,yA,[8,640,20,592,32,640,45,622,57,638,69,618,81,606,94,583,106,608,118,596,130,640,142,646,155,654,167,617,179,654,192,715,204,742,216,720,228,675,241,690,253,675,265,678,277,893,290,915,302,890,314,833,326,836,339,770,351,778,363,720,375,724,388,708,400,700,412,792,424,746,436,724,449,768,461,716,473,705,485,733,498,720,510,686,522,677,535,655,547,640,559,588,571,566,584,558,596,515,608,530,620,530,632,633,645,608,657,566,669,570,681,633,694,566,706,556,718,705,730,745,743,786,755,758,767,772,779,812,791,808,804,843,816,890,828,884,841,920,853,890,865,948,877,938,889,960,902,922,914,950,926,1005,938,1052,951,1032,963,992,975,960,987,900,1000,925,1012,900,1024,858,1036,963,1049,960,1061,908,1073,892,1085,952,1098,843,1110,825,1122,785,1135,785,1147,725,1159,623,1171,607,1184,550,1196,543,1208,545,1220,560,1233,587,1245,597,1257,633,1269,646,1281,684,1294,710,1306,724,1318,746,1330,758,1343,756,1355,776,1367,762,1380,746,1392,716,1404,718,1416,734,1428,746,1441,770,1453,780,1465,774,1477,740,1490,658,1502,637,1514,646,1526,666,1538,627,1551,640,1563,725]),
...C(yA,[370,627,385,588,400,385,415,432,430,398,445,402,460,437,475,520,490,530,505,507,520,480,535,497,550,465,565,485,580,458,595,464,610,464,625,452,640,446,655,434,670,430,685,420,700,404,715,406,730,410,745,397,760,396,775,398,790,461,805,437,820,472,835,476,850,494,865,438,880,420,895,464,910,431,925,407,940,332,955,328,970,352,985,372,1000,328,1015,340,1030,312,1045,282,1060,305,1075,323,1090,326,1105,338,1120,366,1135,347,1150,335,1165,329,1180,328,1195,320,1210,325,1225,326,1240,317,1255,323,1270,336,1285,350,1300,347,1315,353,1330,362,1345,372,1360,380,1375,392,1390,390,1405,377,1420,410,1435,407,1450,431,1465,420,1480,515,1495,507])];
const snap=raw.map(p=>[3.5+5*Math.round((p[0]-3.5)/5),p[1]]);
poly(snap,'#6666ff');
snap.forEach(p=>{s+=`<rect x="${p[0]-2}" y="${(p[1]-2).toFixed(1)}" width="4" height="4" fill="#00ffff"/>`});}

/* markers */
s+=`<rect x="917" y="225" width="7" height="7" fill="#fff"/>`;
const up=(x,y,c)=>{s+=`<path d="M${x} ${y}l3.500 5h-2v7h-3v-7h-2z" fill="${c}"/>`};
up(594,349,'#00ff00');up(1133.500,295,'#00ff00');
s+=`<path d="M972.500 362h3v10h3l-4.500 6-4.500-6h3z" fill="#ff0000"/>`;
s+=`<path d="M588 324.500l5 3.500-5 3.500zM1127 278l5 3.500-5 3.500z" fill="#00ff00"/><path d="M968 393.500l5 3.500-5 3.500z" fill="#ff0000"/>`;

/* panel 2 horizontals */
hl(581.5,2,1658,'#e00000');
hl(619.5,2,1658,'#808000');
hl(657.5,2,1658,'#0000e0',1,'3 3');
hl(695.5,2,1658,'#808000');
hl(700.5,2,1658,'#a000a0');
hl(733.5,2,1658,'#e00000');

/* panel 2 curves */
smooth(uniq([...P(zA,yB,[8,438,80,438,150,452,250,490,350,520,450,540,560,555,650,578,740,597,860,600,1000,603,1060,600,1140,585,1220,550,1300,480,1400,380,1480,290,1568,190]),...P(zD,yB,[40,130,100,100,140,115,190,165,250,240,320,360,400,510,450,550,520,582,600,592,680,610,730,610,790,570,870,450,950,340,1020,290,1070,280,1100,285,1170,325,1250,372,1350,368,1410,410,1480,500,1568,555])]),'#008080',1.300);
smooth(uniq([...P(zA,yB,[8,405,80,420,160,445,250,480,350,505,450,530,520,548,600,565,700,590,800,606,900,612,1000,615,1060,612,1130,600,1260,545,1340,490,1440,410,1568,262]),...P(zD,yB,[50,165,100,100,140,78,180,75,215,88,260,120,300,190,350,300,400,400,450,490,500,565,560,625,620,650,680,663,730,660,780,630,850,560,930,450,1010,340,1070,285,1130,258,1170,258,1210,272,1300,318,1380,365,1460,440,1568,518])]),'#ffff00',1,'3 4');
smooth(uniq([...P(zA,yB,[8,408,130,408,200,415,300,435,400,458,500,490,600,518,700,540,800,565,900,588,1000,603,1100,608,1180,607,1260,600,1350,580,1430,548,1500,505,1568,455]),...P(zD,yB,[50,370,100,290,150,215,200,155,250,120,290,112,330,120,380,160,430,230,500,350,560,450,620,545,680,600,740,640,790,650,850,640,910,600,970,545,1030,460,1090,390,1160,325,1230,285,1290,276,1350,285,1420,315,1480,360,1568,420])]),'#ffff00',1.300);
poly(uniq([...P(zA,yB,[8,265,20,228,32,235,45,228,57,233,69,226,75,300,80,480,95,480,107,475,118,445,130,462,142,425,155,410,180,412,192,415,204,388,216,395,228,452,240,425,253,430,265,440,277,445,290,432,302,448,320,455,335,455,350,468,362,470,375,495,388,480,410,472,425,530,437,520,449,480,461,445,473,410,485,400,498,425,510,435,522,425,535,418,547,500,559,535,571,538,584,530,608,515,620,545,632,560,645,570,657,530,669,498,681,525,694,530,708,568,720,545,735,542,750,540,767,552,779,555,805,545,820,545,840,560,853,575,865,625,877,585,889,560,902,575,914,590,926,575,940,645,951,615,963,465,975,530,987,460,1000,480,1012,488,1024,420,1040,425,1061,405,1073,398,1085,430,1100,450,1110,425,1122,420,1135,442,1147,432,1171,428,1184,404,1196,410,1220,425,1232,412,1257,405,1269,390,1281,388,1296,432,1306,425,1318,350,1330,343,1343,360,1355,368,1367,348,1380,380,1392,378,1398,300,1404,235,1416,210,1428,187,1441,208,1453,195,1477,178,1490,188,1514,192,1526,202,1538,190,1551,172,1568,172]),...P(zD,yB,[12,145,20,172,40,162,50,175,62,165,75,175,85,195,95,180,110,180,118,225,128,258,145,225,165,235,172,330,180,365,195,350,205,330,215,295,228,270,250,270,258,322,270,295,280,322,295,285,305,308,330,285,345,270,355,245,385,235,397,290,410,235,420,285,430,240,440,235,450,340,465,385,475,360,490,390,510,432,520,430,535,418,545,452,560,450,575,425,590,468,605,435,620,400,640,370,650,415,670,385,682,412,690,350,710,322,730,235,745,198,770,230,800,265,830,315,850,325,880,290,915,318,930,290,940,240,950,260,968,235,980,290,995,210,1005,112,1012,130,1020,105,1035,150,1045,212,1052,225,1075,205,1095,170,1110,180,1128,212,1150,208,1175,215,1195,180,1207,240,1230,270,1245,228,1255,250,1280,155,1290,155,1305,205,1320,182,1335,155,1350,197,1375,225,1395,200,1410,238,1435,235,1460,268,1475,272,1505,320,1520,305,1535,360,1550,350,1560,445,1568,440])]),'#00ffff');

/* panel 3 */
hl(821.5,2,1658,'#909090');
{const cci=uniq([...P(zA,yB,[8,968,80,897,100,970,170,1075,230,1190,265,1275,310,1243,340,1243,400,1272,450,1288,520,1243,565,1225,600,1235,635,1235,680,1268,740,1297,830,1292,880,1302,940,1302,965,1312,1020,1280,1070,1215,1150,1162,1210,1147,1290,1147,1320,1152,1350,1135,1405,1125,1440,1030,1500,890,1530,850,1568,780]),...P(zD,yB,[20,727,125,815,175,875,195,940,230,980,290,1010,350,970,400,900,450,862,480,940,520,1070,565,1230,612,1285,660,1235,700,1190,760,1000,800,930,835,905,870,940,925,995,970,950,1000,930,1040,825,1090,815,1115,798,1135,815,1160,830,1200,830,1280,875,1330,870,1360,848,1400,850,1470,875,1520,925,1568,1025])]);
for(let k=1;3.5+5*k<=1653.5;k++){const x=3.5+5*k;vl(x,890.5,lerp(cci,x).toFixed(1),'#545454')}
hl(895.5,2,1658,'#008888');
hl(960.5,2,1658,'#909090');
s+=`<g clip-path="url(#cb)">`;poly(cci,'#b4b4b4');s+=`</g><g clip-path="url(#ca)">`;poly(cci,'#ff0000');s+=`</g><g clip-path="url(#cc)">`;poly(cci,'#00ffff');s+=`</g>`;
poly(uniq([...P(zA,yB,[8,990,50,1090,80,1125,115,1230,140,1250,165,1240,190,1190,240,1150,300,1125,315,1030,350,908,430,915,445,935,500,925,530,990,570,1022,610,1020,640,1060,700,1105,770,1135,800,1110,860,1050,940,975,1000,950,1040,930,1090,895,1150,960,1190,960,1210,1030,1250,1140,1310,1225,1350,1165,1405,1100,1420,1030,1470,880,1530,860,1568,930]),...P(zD,yB,[40,1020,70,1190,95,1258,130,1245,160,1160,210,1050,250,930,275,870,305,890,330,860,370,900,400,1010,450,1160,490,1240,525,1275,570,1200,600,1030,640,800,672,765,710,800,750,900,790,1060,820,1160,850,1250,900,1310,940,1200,990,860,1035,728,1065,830,1095,1040,1140,1240,1175,1280,1215,1110,1250,1020,1290,935,1340,985,1380,945,1420,1030,1470,1100,1505,1180,1540,1140,1568,1110])]),'#008080');
smooth(uniq([...P(zA,yB,[8,880,60,1000,110,1120,170,1215,200,1225,260,1175,330,1090,380,970,420,920,500,925,570,975,640,1040,720,1075,790,1110,840,1112,900,1065,960,995,1050,950,1120,915,1170,925,1230,1010,1300,1165,1370,1190,1420,1130,1470,1000,1530,870,1568,780]),...P(zD,yB,[30,880,60,1040,100,1200,130,1245,165,1220,230,1000,290,890,345,877,380,885,420,980,470,1130,530,1240,570,1250,620,1000,670,800,710,783,760,880,830,1110,900,1280,930,1295,970,1130,1020,790,1060,752,1090,850,1130,1120,1190,1250,1240,1120,1310,960,1390,968,1470,1090,1520,1165,1568,1140])]),'#ff0000',1,'4 3');
smooth(uniq([...P(zA,yB,[8,855,60,975,100,1075,170,1200,210,1225,250,1200,330,1130,380,1010,430,925,500,925,570,960,640,1025,720,1070,790,1105,840,1112,900,1085,960,1010,1050,960,1120,918,1170,920,1230,990,1300,1120,1370,1190,1420,1160,1480,1020,1530,905,1568,870]),...P(zD,yB,[30,920,60,1020,100,1170,140,1245,170,1220,230,1050,290,900,340,877,380,880,420,950,470,1090,540,1240,580,1240,620,1070,680,810,720,788,770,860,830,1060,920,1295,950,1270,990,1030,1030,800,1070,757,1100,830,1140,1080,1200,1250,1250,1140,1330,960,1420,970,1480,1060,1530,1160,1568,1150])]),'#0000ff');
poly(uniq([...P(zA,yB,[8,1030,60,1040,100,1110,130,1240,150,1285,175,1312,1000,1312,1050,1290,1120,1235,1180,1180,1240,1095,1290,980,1340,780,1365,728,1568,728]),...P(zD,yB,[130,728,180,740,230,800,280,860,330,980,370,1080,420,1260,435,1280,455,1268,490,1290,515,1312,720,1312,760,1240,800,1090,840,890,885,728,1070,728,1120,760,1190,810,1230,828,1290,755,1335,738,1385,830,1420,1080,1455,1312,1568,1312])]),'#c86400',1,'3 2');}
[[757.8,799],[1353.7,800],[1508.6,798]].forEach(p=>{s+=`<rect x="${p[0]-3.5}" y="${p[1]-4}" width="7" height="8" rx="3" fill="#00ffff"/>`});
[[428,981],[1118,979]].forEach(p=>{s+=`<rect x="${p[0]-3.5}" y="${p[1]-4}" width="7" height="8" rx="3" fill="#ff0000"/>`});

/* axes */
vl(1840.5,88,989,'#ffffff');
hl(989.5,2,1918,'#ffffff');
hl(773.5,1839,1918,'#ffffff');
[188,259,330,401,473,600,638,677,714,752,803,861,919,948,977].forEach(y=>hl(y+.5,1841,1847,'#ffffff'));
[104,174,244,314,384,454,524,664,733,803,873,1013,1083,1154,1223,1363,1433,1573,1643,1713,1783].forEach(x=>vl(x+.5,990,994,'#ffffff'));
for(let k=0;k<10;k++)vl(33.5+180*k,990,1000,'#ffffff');
document.getElementById('chart').innerHTML=s;
</script>
</body>
</html>
